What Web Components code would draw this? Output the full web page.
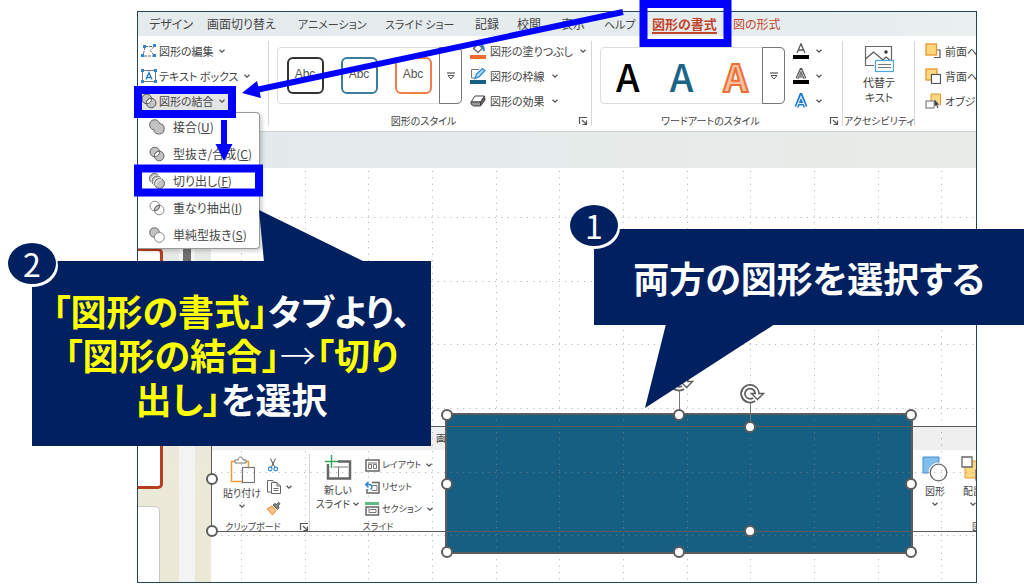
<!DOCTYPE html>
<html lang="ja">
<head>
<meta charset="utf-8">
<title>図形の結合 - 切り出し</title>
<style>
  body { margin: 0; background: #fff; color: #444; font: 12px/16px "Noto Sans CJK JP", sans-serif; font-feature-settings: "palt"; }
</style>
</head>
<body>
<tutorial-page></tutorial-page>
<script>
const ICONS = {
  chevron: [8, 8, '<path d="M1.5 2.8 4 5.2 6.500 2.8" fill="none" stroke="#555" stroke-width="1.3"/>'],
  more: [10, 10, '<path d="M1 2h8" stroke="#555" stroke-width="1.2"/><path d="M2 4.500h6L5 8z" fill="#fff" stroke="#555"/>'],
  launcher: [10, 10, '<path d="M1.500 8V1.500H9M4 4l4 4M8.500 4.500v4h-4" fill="none" stroke="#555" stroke-width="1.2"/>'],
  edit: [16, 16, '<path d="M4 3.500h9M13 3.500 9.500 7.500l3.500 5M3 13h10M4 4 2 13" fill="none" stroke="#666" stroke-dasharray="3 1"/><g fill="#2b88d0"><path d="M2 2h3v3H2zM12 1h3v3h-3zM0 11h3v3H0zM12 11h3v3h-3z"/></g>'],
  textbox: [16, 16, '<rect x="1.500" y="2.500" width="13" height="11" fill="#fff" stroke="#777"/><g fill="#2b88d0"><path d="M0 1h3v3H0zM13 1h3v3h-3zM0 12h3v3H0zM13 12h3v3h-3z"/></g><path d="M5 11.500 8 4.500l3 7M6 9.500h4" fill="none" stroke="#2b7fc4" stroke-width="1.4"/>'],
  merge: [16, 16, '<circle cx="5.800" cy="6" r="4.800" fill="#c4c4c4" stroke="#555"/><circle cx="10.200" cy="10" r="4.800" fill="#c4c4c4" stroke="#555"/><path d="M5.500 10.700A4.800 4.800 0 0 1 10.500 5.300 4.800 4.800 0 0 1 5.500 10.700z" fill="#fff" stroke="#555"/>'],
  union: [16, 16, '<path d="M10.500 4.500A5 5 0 1 0 4.700 10.700a5.300 5.300 0 1 0 5.800-6.200z" fill="#c2c2c2" stroke="#666"/>'],
  combine: [16, 16, '<circle cx="5.800" cy="6" r="4.800" fill="#c2c2c2" stroke="#666"/><circle cx="10.200" cy="10" r="4.800" fill="#c2c2c2" stroke="#666"/><path d="M5.500 10.700A4.800 4.800 0 0 1 10.500 5.300 4.800 4.800 0 0 1 5.500 10.700z" fill="#fff" stroke="#666"/>'],
  fragment: [16, 16, '<circle cx="5.500" cy="5.500" r="5" fill="#c2c2c2" stroke="#666"/><circle cx="8" cy="8" r="5" fill="#c2c2c2" stroke="#fff" stroke-width="2.500"/><circle cx="8" cy="8" r="5" fill="#c2c2c2" stroke="#666"/><circle cx="10.500" cy="10.500" r="5" fill="#c2c2c2" stroke="#fff" stroke-width="2.500"/><circle cx="10.500" cy="10.500" r="5" fill="#c2c2c2" stroke="#666"/><path d="M7 12.500a5 5 0 0 1 5.500-6" fill="none" stroke="#fff"/>'],
  intersect: [16, 16, '<circle cx="5.800" cy="6" r="4.800" fill="#fff" stroke="#888"/><circle cx="10.200" cy="10" r="4.800" fill="none" stroke="#888"/><path d="M5.500 10.700A4.800 4.800 0 0 1 10.500 5.300 4.800 4.800 0 0 1 5.500 10.700z" fill="#c2c2c2" stroke="#666"/>'],
  subtract: [16, 16, '<circle cx="5.500" cy="5.500" r="4.800" fill="#c2c2c2" stroke="#666"/><circle cx="10.400" cy="10.400" r="4.900" fill="#fff" stroke="#888"/>'],
  fill: [16, 16, '<path d="m8 .800 4.500 4.500L8 9.500 3.500 5.500z" fill="#fff" stroke="#555" stroke-width="1.200"/><path d="M11 2c2 .500 3 3 2.800 6" fill="none" stroke="#2b7fc4" stroke-width="2"/><path d="M0 12h16v4H0z" fill="#ed6b2d"/>'],
  outline: [16, 16, '<path d="M9 1.500H1.500V10H5" fill="none" stroke="#777"/><path d="M5 10.500 6.500 6l6-5.500 2.500 2L9 9z" fill="#a8d5f2" stroke="#2b88d0" stroke-width="1.200"/><path d="M0 12h16v4H0z" fill="#165f82"/>'],
  effect: [16, 16, '<path d="M5 3h9.500l-4 6H1z" fill="#fff" stroke="#444"/><path d="M1 9h9.500v4H3.500L1 11z" fill="#999" stroke="#444"/><path d="m14.500 3 .5 4-4.500 6V9z" fill="#666" stroke="#444"/>'],
  fontfill: [16, 16, '<path d="M4 10 8 .800 12 10M5.500 7h5" fill="none" stroke="#555" stroke-width="1.300"/><path d="M0 12h16v4H0z" fill="#000"/>'],
  fontline: [16, 16, '<path d="M4 10.500 8 1.500l4 9M5.500 8h5" fill="none" stroke="#555" stroke-width="3"/><path d="M4 10.500 8 2l4 8.500M5.500 8h5" fill="none" stroke="#ccc"/><path d="M0 12h16v4H0z" fill="#000"/>'],
  fonteffect: [16, 16, '<path d="M3.500 14 8 2.500 12.500 14M5 10.500h6" fill="none" stroke="#1f78c4" stroke-width="4"/><path d="M3.500 14 8 3.500 12.500 14M5 10.500h6" fill="none" stroke="#d5ebfa" stroke-width="1.200"/>'],
  alttext: [30, 28, '<path d="M10 20.500H1.500v-19h26V15" fill="#fff" stroke="#666" stroke-width="1.200"/><path d="m1.500 14 8-7 9.500 8 3-3 5 4" fill="none" stroke="#555" stroke-width="1.200"/><circle cx="22" cy="7" r="1.700" fill="#333"/><rect x="11.500" y="15.500" width="18" height="11" fill="#fff" stroke="#4da3dc" stroke-width="1.200"/><path d="M14 19.500h13M14 22.500h13" stroke="#777"/>'],
  forward: [16, 16, '<path d="M9 14.500h6V7h-3" fill="none" stroke="#555" stroke-width="1.200"/><rect x="1" y="1" width="10.500" height="11" fill="#fbd87f" stroke="#e9962f" stroke-width="1.300"/>'],
  backward: [16, 16, '<rect x="1" y="1" width="11" height="11" fill="#fbd87f" stroke="#e9962f" stroke-width="1.300"/><rect x="6.500" y="6.500" width="9" height="9" fill="#fff" stroke="#555" stroke-width="1.200"/>'],
  selectpane: [16, 16, '<path d="M6 1h9.500v11H6z" fill="#fbd87f" stroke="#e9962f"/><rect x="1" y="8" width="8" height="7" fill="#fff" stroke="#666"/><path d="M9 5.500v9l2-2 1.300 3 1.500-.700-1.200-2.800H15z" fill="#444" stroke="#fff" stroke-width=".6"/>'],
  paste: [26, 28, '<rect x="2.500" y="5.500" width="17" height="20" fill="#fff" stroke="#ef9a35" stroke-width="1.500"/><path d="M6 7V4h3c0-4 5-4 5 0h3v3z" fill="#fff" stroke="#777"/><rect x="13.500" y="11.500" width="12" height="15" fill="#fff" stroke="#777" stroke-width="1.200"/>'],
  cut: [14, 14, '<path d="M4.500.500 9 10M9.500.500 5 10" stroke="#555" fill="none"/><circle cx="4.200" cy="11" r="1.800" fill="none" stroke="#2b88d0" stroke-width="1.200"/><circle cx="9.800" cy="11" r="1.800" fill="none" stroke="#2b88d0" stroke-width="1.200"/>'],
  copy: [16, 14, '<path d="M7 12H1.500V.500H7l1.500 1.500" fill="none" stroke="#666"/><path d="M5.500 2.500H11L14.500 6v7.500h-9zM11 2.500V6h3.500M7.500 8.500h5M7.500 10.500h5" fill="#fff" stroke="#666"/>'],
  brush: [15, 14, '<path d="M1 7 6 4l4 4.500L6.500 13z" fill="#fbc489" stroke="#ef8a25"/><path d="m7 3 4.500 4.500 1.500-2-1-1.500L14 1.500 12.500.500 10.500 2.500 9 1.500z" fill="#888" stroke="#555"/>'],
  newslide: [28, 26, '<rect x="4" y="6.500" width="22" height="17" fill="#fff" stroke="#666" stroke-width="2.500"/><path d="M5 12h19M14.500 12v10" stroke="#777"/><path d="M7.500 0v14M1 7h13" stroke="#fff" stroke-width="4"/><path d="M7.500 0v13M1 6.500h13" stroke="#2fa35a" stroke-width="1.400"/>'],
  layout: [15, 13, '<rect x="1" y="1" width="13" height="11" fill="#fff" stroke="#666" stroke-width="1.500"/><path d="M3 4h9M3.500 5.500h3v4h-3zM8.500 5.500h3v4h-3z" fill="none" stroke="#777"/>'],
  reset: [15, 13, '<path d="M7 1.500h7V12H2V8" fill="#fff" stroke="#666" stroke-width="1.500"/><path d="M7 4.500h5M7 9.500h5V5" stroke="#777" fill="none"/><path d="M1 3.500h3.500c3 0 3 4 1 5M3.500.800.800 3.500l2.700 3" fill="none" stroke="#2b88d0" stroke-width="1.400"/>'],
  section: [15, 14, '<path d="M0 0h14v3H0z" fill="#5fb982"/><rect x="1" y="5" width="12.500" height="8" fill="#fff" stroke="#666" stroke-width="1.500"/><path d="M4 7.500h7v3H4z" fill="none" stroke="#777"/>'],
  shapes: [26, 26, '<path d="M1 1h16v16H1z" fill="#83bdec" stroke="#3f8fd0"/><circle cx="16.500" cy="16.500" r="8.500" fill="#fff" stroke="#fff" stroke-width="3"/><circle cx="16.500" cy="16.500" r="8.300" fill="#fff" stroke="#666" stroke-width="1.300"/>'],
  arrange: [26, 26, '<path d="M5 5h14v17H5z" fill="#fbd87f" stroke="#e9962f"/><path d="M2 1h10v10H2zM16 14h10v10H16z" fill="#fff" stroke="#666" stroke-width="1.300"/>'],
  rotate: [26, 22, '<path d="M18 11a7 7 0 1 0-3 5.500" fill="none" stroke="#5c5c5c" stroke-width="5.500"/><path d="M12.500 10.500h12L18.500 16.500z" fill="#fff" stroke="#5c5c5c" stroke-width="1.400"/><path d="M18 12a7 7 0 1 0-3 4.500" fill="none" stroke="#fff" stroke-width="2"/>']
};

function define(name, html, setup) {
  const template = document.createElement('template');
  template.innerHTML = html;
  customElements.define(name, class extends HTMLElement {
    constructor() {
      super();
      this.attachShadow({ mode: 'open' }).append(template.content.cloneNode(true));
    }
    connectedCallback() { if (setup) setup(this, this.shadowRoot); }
  });
}

define('ui-icon', `<style>:host{display:inline-flex;flex:none}svg{display:block}</style>`, (el, root) => {
  const [w, h, body] = ICONS[el.getAttribute('name')];
  root.innerHTML += `<svg width="${w}" height="${h}" viewBox="0 0 ${w} ${h}" aria-hidden="true">${body}</svg>`;
});

/* One ribbon command: icon, text and an optional drop-down chevron */
define('ribbon-command', `
<style>
  :host{display:block}
  button{all:unset;box-sizing:border-box;display:flex;align-items:center;gap:var(--gap,2px);height:100%;width:100%;white-space:nowrap}
  :host([big]) button{flex-direction:column;text-align:center;gap:2px}
  .chev{margin-left:2px}
  :host([big]) .chev{margin:0}
  :host(:not([menu])) .chev{display:none}
</style>
<button type="button"><slot name="icon"></slot><slot></slot><ui-icon class="chev" name="chevron"></ui-icon></button>`,
(el, root) => {
  if (el.hasAttribute('label')) root.querySelector('button').setAttribute('aria-label', el.getAttribute('label'));
});

define('ribbon-group', `
<style>
  :host{display:flex;flex-direction:column;position:relative;box-sizing:border-box;padding:2px 0;min-width:0;font-size:11px}
  :host::after{content:"";position:absolute;right:0;top:5px;bottom:5px;width:1px;background:#d6d6d6}
  :host([last])::after{display:none}
  .body{display:flex;height:75px;padding:0 0 0 var(--pad,8px)}
  footer{display:grid;grid-template-columns:1fr 14px;align-items:center;height:16px;white-space:nowrap;font-size:10px}
  footer span{justify-self:center}
  button{all:unset;display:flex}
  :host(:not([launcher])) button{display:none}
  :host([tight]) footer{grid-template-columns:1fr}
</style>
<div class="body"><slot></slot></div>
<footer><span></span><button type="button" aria-label="詳細"><ui-icon name="launcher"></ui-icon></button></footer>`,
(el, root) => { root.querySelector('span').textContent = el.getAttribute('label') || ''; });

define('style-gallery', `
<style>
  :host{display:flex;box-sizing:border-box;width:185px;height:57px;margin-top:9px;border:1px solid #ddd;border-radius:4px;background:#fff;flex:none}
  .items{flex:1;display:flex;align-items:center;justify-content:space-around}
  button{all:unset;box-sizing:border-box;width:23px;margin:-1px;border:1px solid #777;border-radius:0 5px 5px 0;display:flex;align-items:center;justify-content:center}
</style>
<div class="items"><slot></slot></div>
<button type="button" aria-label="その他"><ui-icon name="more"></ui-icon></button>`);

define('ribbon-tabs', `
<style>
  :host{display:block;background:linear-gradient(90deg,#e5ebed,#e6edef 80%,#eaefef)}
  nav{display:grid;grid-template-columns:58px 91px 87px 90px 42px 44px 43px 48px 81px auto;padding-left:11px;height:24px;align-items:center;white-space:nowrap}
  button{all:unset}
  .kana{font-size:11px}
  .on{font-weight:700;font-size:13px;color:#c2452d;display:grid;justify-self:start;border-bottom:2px solid #c2452d;line-height:17px}
  .ctx{color:#c2452d}
</style>
<nav aria-label="リボン">
<button>デザイン</button><button>画面切り替え</button><button class="kana">アニメーション</button><button class="kana">スライド ショー</button><button>記録</button><button>校閲</button><button>表示</button><button class="kana">ヘルプ</button><button class="on">図形の書式</button><button class="ctx">図の形式</button>
</nav>`);

define('shape-ribbon', `
<style>
  :host{display:grid;grid-template-columns:131px 323px 251px 72px 1fr;background:#fff;border-bottom:1px solid #cdd2d4;overflow:hidden}
  .rows{display:grid;grid-template-rows:25px 25px 25px;--gap:4px}
  .shapes{width:127px;--gap:2px}
  .fx{margin-left:8px}
  .pressed{background:#e4e4e4;width:90px}
  .abc{box-sizing:border-box;width:37px;height:37px;border:2px solid var(--c);border-radius:6px;display:grid;place-items:center;font:12px "Liberation Sans",sans-serif;color:#555;padding-bottom:4px}
  .wa{font:500 38px/50px "Noto Sans CJK JP",sans-serif}
  .w3{color:#f9bea0;-webkit-text-stroke:2px #ea7038;font-weight:700}
  .alt{width:100%;margin-top:7px;height:64px;line-height:15px}
</style>
<ribbon-group style="--pad:3px">
  <div class="rows shapes">
    <ribbon-command menu><ui-icon slot="icon" name="edit"></ui-icon>図形の編集</ribbon-command>
    <ribbon-command menu><ui-icon slot="icon" name="textbox"></ui-icon>テキスト ボックス</ribbon-command>
    <ribbon-command menu class="pressed"><ui-icon slot="icon" name="merge"></ui-icon>図形の結合</ribbon-command>
  </div>
</ribbon-group>
<ribbon-group label="図形のスタイル" launcher>
  <style-gallery><span class="abc" style="--c:#333">Abc</span><span class="abc" style="--c:#3b7d9e">Abc</span><span class="abc" style="--c:#ef7d4a">Abc</span></style-gallery>
  <div class="rows fx">
    <ribbon-command menu><ui-icon slot="icon" name="fill"></ui-icon>図形の塗りつぶし</ribbon-command>
    <ribbon-command menu><ui-icon slot="icon" name="outline"></ui-icon>図形の枠線</ribbon-command>
    <ribbon-command menu><ui-icon slot="icon" name="effect"></ui-icon>図形の効果</ribbon-command>
  </div>
</ribbon-group>
<ribbon-group label="ワードアートのスタイル" launcher>
  <style-gallery><span class="wa" style="color:#000">A</span><span class="wa" style="color:#1b6488">A</span><span class="wa w3">A</span></style-gallery>
  <div class="rows fx">
    <ribbon-command menu label="文字の塗りつぶし"><ui-icon slot="icon" name="fontfill"></ui-icon></ribbon-command>
    <ribbon-command menu label="文字の輪郭"><ui-icon slot="icon" name="fontline"></ui-icon></ribbon-command>
    <ribbon-command menu label="文字の効果"><ui-icon slot="icon" name="fonteffect"></ui-icon></ribbon-command>
  </div>
</ribbon-group>
<ribbon-group label="アクセシビリティ" tight style="--pad:0px">
  <ribbon-command big class="alt"><ui-icon slot="icon" name="alttext"></ui-icon><span>代替テ<br>キスト</span></ribbon-command>
</ribbon-group>
<ribbon-group last style="--pad:10px">
  <div class="rows">
    <ribbon-command><ui-icon slot="icon" name="forward"></ui-icon>前面へ</ribbon-command>
    <ribbon-command><ui-icon slot="icon" name="backward"></ui-icon>背面へ</ribbon-command>
    <ribbon-command><ui-icon slot="icon" name="selectpane"></ui-icon>オブジェ</ribbon-command>
  </div>
</ribbon-group>`);

define('merge-menu', `
<style>
  :host{display:block;box-sizing:border-box;width:122px;background:#fff;border:1px solid #999;border-left:0;border-radius:0 4px 4px 0;box-shadow:2px 2px 4px #0003}
  button{all:unset;box-sizing:border-box;display:flex;align-items:center;gap:8px;width:100%;height:27px;padding-left:11px;white-space:nowrap}
</style>
<div role="menu">
<button role="menuitem"><ui-icon name="union"></ui-icon><span>接合(<u>U</u>)</span></button>
<button role="menuitem"><ui-icon name="combine"></ui-icon><span>型抜き/合成(<u>C</u>)</span></button>
<button role="menuitem"><ui-icon name="fragment"></ui-icon><span>切り出し(<u>F</u>)</span></button>
<button role="menuitem"><ui-icon name="intersect"></ui-icon><span>重なり抽出(<u>I</u>)</span></button>
<button role="menuitem"><ui-icon name="subtract"></ui-icon><span>単純型抜き(<u>S</u>)</span></button>
</div>`);

/* The ribbon picture that has been pasted on the slide */
define('pasted-ribbon', `
<style>
  :host{display:flex;flex-direction:column;overflow:hidden;background:#efefef;font-size:10px;line-height:14px}
  .tabs{height:24px;display:flex;align-items:center;padding-left:225px;position:relative}
  .tabs::after{content:"";position:absolute;left:51px;bottom:4px;width:30px;height:2px;background:#b83a24}
  .bar{flex:1;display:flex;background:#fff;border-radius:6px 0 0 0;min-height:0}
  section{display:flex;flex-direction:column;flex:none}
  .clip{width:98px;border-right:1px solid #d6d6d6;margin-top:4px}
  .slides{width:136px;margin-top:4px}
  .draw{margin-left:476px;margin-top:4px}
  .cmds{display:flex;height:66px;flex:none}
  .paste{width:38px;margin-left:12px;height:60px;padding-top:2px}
  .col{display:grid;grid-template-rows:22px 22px 22px;align-items:center;font-size:9px}
  .clip .col{margin-left:5px;--gap:1px}
  .new{width:44px;margin-left:6px;padding-top:1px;height:60px}
  .slides .col{margin-left:5px;--gap:2px}
  .label{display:flex;justify-content:center;align-items:center;white-space:nowrap;font-size:9px}
  .clip .label{gap:18px;padding-left:14px}
  .draw .cmds{gap:12px}
  .draw ribbon-command{width:26px;height:60px;padding-top:2px}
  .draw .label{justify-content:flex-start;padding-left:50px}
</style>
<div class="tabs">画面切り替え</div>
<div class="bar">
  <section class="clip">
    <div class="cmds">
      <ribbon-command big menu class="paste"><ui-icon slot="icon" name="paste"></ui-icon>貼り付け</ribbon-command>
      <div class="col">
        <ribbon-command label="切り取り"><ui-icon slot="icon" name="cut"></ui-icon></ribbon-command>
        <ribbon-command menu label="コピー"><ui-icon slot="icon" name="copy"></ui-icon></ribbon-command>
        <ribbon-command label="書式のコピー"><ui-icon slot="icon" name="brush"></ui-icon></ribbon-command>
      </div>
    </div>
    <div class="label">クリップボード<ui-icon name="launcher"></ui-icon></div>
  </section>
  <section class="slides">
    <div class="cmds">
      <ribbon-command big class="new"><ui-icon slot="icon" name="newslide"></ui-icon><span>新しい<br>スライド <ui-icon name="chevron"></ui-icon></span></ribbon-command>
      <div class="col">
        <ribbon-command menu><ui-icon slot="icon" name="layout"></ui-icon>レイアウト</ribbon-command>
        <ribbon-command><ui-icon slot="icon" name="reset"></ui-icon>リセット</ribbon-command>
        <ribbon-command menu><ui-icon slot="icon" name="section"></ui-icon>セクション</ribbon-command>
      </div>
    </div>
    <div class="label">スライド</div>
  </section>
  <section class="draw">
    <div class="cmds">
      <ribbon-command big menu><ui-icon slot="icon" name="shapes"></ui-icon>図形</ribbon-command>
      <ribbon-command big menu><ui-icon slot="icon" name="arrange"></ui-icon>配置</ribbon-command>
    </div>
    <div class="label">図</div>
  </section>
</div>`);

/* Selection frame with round handles; its box is the selected object's box */
define('selection-frame', `
<style>
  :host{position:absolute;box-sizing:border-box;border:var(--line,2px) solid #5c5c5c}
  i{position:absolute;box-sizing:border-box;width:12px;height:12px;margin:-6px;border:2px solid #5c5c5c;border-radius:50%;background:#fff}
  .stem{position:absolute;left:50%;top:var(--stem-top);height:var(--stem);width:1px;background:#777}
  ui-icon{position:absolute;left:50%;top:calc(var(--stem-top) - 20px);margin-left:-11px}
</style>
<span class="stem"></span><ui-icon name="rotate"></ui-icon>
<i style="left:0;top:0"></i><i style="left:50%;top:0"></i><i style="left:100%;top:0"></i>
<i style="left:0;top:50%"></i><i style="left:100%;top:50%"></i>
<i style="left:0;top:100%"></i><i style="left:50%;top:100%"></i><i style="left:100%;top:100%"></i>`);

define('slide-canvas', `
<style>
  :host{display:block;position:relative;background:#fff;min-height:410px}
  svg{position:absolute;inset:0;width:100%;height:100%}
  pasted-ribbon{position:absolute;left:0;top:258px;width:1078px;height:106px}
  .rect{position:absolute;left:234px;top:246px;width:467px;height:140px;background:#165f82}
  .f1{left:234px;top:245px;width:468px;height:141px;--stem-top:-24px;--stem:24px}
  .f2{left:0;top:258px;width:1078px;height:106px;--line:1px;--stem-top:-24px;--stem:24px}
</style>
<pasted-ribbon></pasted-ribbon>
<div class="rect"></div>
<svg aria-hidden="true"></svg>
<selection-frame class="f1"></selection-frame>
<selection-frame class="f2"></selection-frame>`,
(el, root) => {
  const step = 63.65;
  let lines = '';
  for (let i = 0; i < 40; i++) {
    const x = Math.round(30 + i * step) + .5, y = Math.round(49 + i * step) + .5;
    lines += `<path d="M${x} 3V1200M4 ${y}H2600"/>`;
  }
  root.querySelector('svg').innerHTML = `<g stroke="#8a8a8a" stroke-opacity=".7" stroke-dasharray="1 5.365">${lines}</g>`;
});

define('slide-workspace', `
<style>
  :host{display:grid;grid-template-columns:41px 16px 16px 1fr;grid-template-rows:36px 1fr;background:linear-gradient(#e3e9eb,#e6eae7 25%,#ebe9d8 75%,#ebe8d6);overflow:hidden}
  .top{grid-column:1/-1;background:linear-gradient(90deg,#e3e9ec,#e6ebea 60%,#e8ebe6)}
  .thumbs{display:flex;flex-direction:column;gap:17px;padding-top:80px}
  .thumb{box-sizing:border-box;width:22px;flex:1;background:#fff;border:1px solid #c9c9c9;border-width:1px 1px 0 0;border-radius:0 5px 0 0}
  .thumb.on{width:25px;flex:0 0 241px;border:3px solid #b83c22;border-left:0;border-radius:0 5px 5px 0}
  .scroll{background:#f3f3f3}
  .scroll::before{content:"";display:block;width:8px;height:180px;margin-left:4px;background:#707070}
</style>
<div class="top"></div>
<div class="thumbs"><div class="thumb on"></div><div class="thumb"></div></div>
<div class="scroll"></div>
<div></div>
<slide-canvas></slide-canvas>`);

define('presentation-window', `
<style>
  :host{display:flex;flex-direction:column;position:relative;box-sizing:border-box;border:1px solid #244556;overflow:hidden;background:#fff}
  slide-workspace{flex:1}
  merge-menu{position:absolute;left:0;top:100px}
</style>
<ribbon-tabs></ribbon-tabs><shape-ribbon></shape-ribbon><slide-workspace></slide-workspace><merge-menu></merge-menu>`);

/* Numbered speech bubble */
define('step-callout', `
<style>
  :host{position:absolute;box-sizing:border-box;display:grid;place-items:center;background:#002060;color:#fff;font-weight:700;font-size:36px;line-height:44px;text-align:center;white-space:nowrap}
  svg{position:absolute;left:0;top:0;overflow:visible}
  .num{position:absolute;left:-24px;top:var(--num-top,-24px);width:48px;height:41px;border-radius:50%;background:#002060;box-shadow:1px 2px 0 1px #fff;font:400 32px/41px "Noto Sans CJK JP",sans-serif}
  ::slotted(p){margin:0;position:relative}
</style>
<svg width="1" height="1" aria-hidden="true"><polygon fill="#002060"/></svg>
<slot></slot><span class="num"></span>`,
(el, root) => {
  root.querySelector('.num').textContent = el.getAttribute('step');
  root.querySelector('polygon').setAttribute('points', el.getAttribute('tail'));
});

define('tutorial-page', `
<style>
  :host{display:flex;position:relative;box-sizing:border-box;min-height:100vh;padding:11px 47px 1px 137px;overflow:hidden}
  presentation-window{flex:1;min-width:0}
  .marks{position:absolute;left:0;top:0}
  .one{left:594px;right:0;top:229px;height:96px}
  .two{left:32px;top:261px;width:399px;height:185px;--num-top:-18px}
  em{font-style:normal;color:#ff0}
  .thin{font-weight:300}
</style>
<presentation-window></presentation-window>
<svg class="marks" width="740" height="210" aria-hidden="true">
  <g fill="none" stroke="#00f" stroke-width="8"><rect x="138" y="90" width="94" height="24"/><rect x="138" y="168.500" width="121" height="24"/><rect x="643.500" y="4" width="84" height="39"/></g>
  <path d="M623 12 256 90M224 120v28" stroke="#00f" stroke-width="6" fill="none"/>
  <path d="m242 93 15-12 4 17zM215.500 144h17l-8.500 17z" fill="#00f"/>
</svg>
<step-callout class="two" step="2" tail="232,1 227,-51 333,1"><p><em>「図形の書式」</em>タブより、<br><em>「図形の結合」</em><span class="thin">→</span><em>「切り<br>出し」</em>を選択</p></step-callout>
<step-callout class="one" step="1" tail="72,95 181,95 51,179"><p>両方の図形を選択する</p></step-callout>`);
</script>
</body>
</html>
